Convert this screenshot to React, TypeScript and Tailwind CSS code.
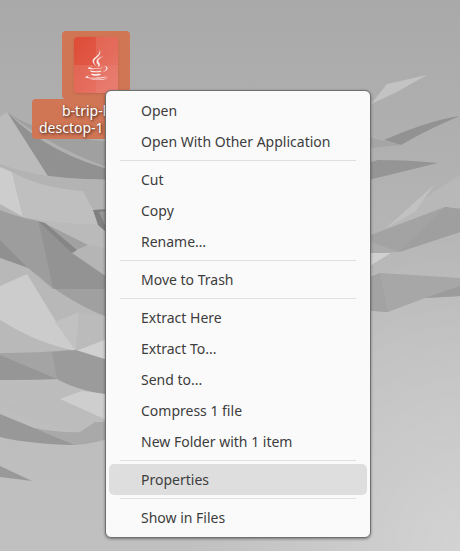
import { FaJava } from "react-icons/fa";

const groups: string[][] = [
  ["Open", "Open With Other Application"],
  ["Cut", "Copy", "Rename…"],
  ["Move to Trash"],
  ["Extract Here", "Extract To...", "Send to...", "Compress 1 file", "New Folder with 1 item"],
  ["Properties"],
  ["Show in Files"],
];

function Wallpaper() {
  return (
    <svg
      className="absolute inset-0 h-full w-full"
      viewBox="0 0 460 551"
      preserveAspectRatio="xMidYMid slice"
      aria-hidden="true"
    >
      <defs>
        <linearGradient id="sky" x1="0" y1="0" x2="0" y2="1">
          <stop offset="0" stopColor="#a9a9a9" />
          <stop offset="0.3" stopColor="#b1b1b1" />
          <stop offset="0.65" stopColor="#bcbcbc" />
          <stop offset="1" stopColor="#c0c0c0" />
        </linearGradient>
        <radialGradient id="glow" cx="1" cy="1" r="0.6">
          <stop offset="0" stopColor="#ffffff" stopOpacity="0.3" />
          <stop offset="1" stopColor="#ffffff" stopOpacity="0" />
        </radialGradient>
      </defs>
      <rect width="460" height="551" fill="url(#sky)" />
      <rect width="460" height="551" fill="url(#glow)" />

      {/* left wing, top to bottom */}
      <path fill="#a0a0a0" d="M7 112Q40 136 120 143V172Q50 148 7 112z" />
      <path fill="#919191" d="M7 112Q50 156 120 172V180L49 178z" />
      <path fill="#bbbbbb" d="M7 112L49 178Q20 173 0 164V117z" />
      <path fill="#b3b3b3" d="M0 164Q40 180 120 180V226Q40 226 0 204z" />
      <path fill="#cdcdcd" d="M0 167L12 172L23 217L0 204z" />
      <path fill="#bfbfbf" d="M12 172Q40 188 83 191L92 208L105 225Q60 225 23 217z" />
      <path fill="#bababa" d="M23 217Q60 226 120 224V252L88 245L38 221z" />
      <path fill="#808080" d="M93 210L120 208V240L105 231L98 225z" />
      <path fill="#989898" d="M99 212L120 210V228L105 225z" />
      <path fill="#9d9d9d" d="M0 210Q20 218 38 221L53 288L28 268L0 258z" />
      <path fill="#909090" d="M0 240L28 268L0 258z" />
      <path fill="#939393" d="M38 221L120 286V289H53z" />
      <path fill="#a1a1a1" d="M42 222L88 245L76 250z" />
      <path fill="#868686" d="M38 221L45 223L77 250L72 253z" />
      <path fill="#b5b5b5" d="M72 253L88 245L120 252V286z" />
      <path fill="#b8b8b8" d="M0 258L28 268Q60 304 120 322V345L76 351L0 320z" />
      <path fill="#a0a0a0" d="M28 268L53 289H120V322Q70 305 28 268z" />
      <path fill="#cccccc" d="M0 286L27 274L55 320L76 351Q38 344 0 320z" />
      <path fill="#c1c1c1" d="M55 322L79 312L76 351z" />
      <path fill="#bbbbbb" d="M79 312L120 318V338L76 351z" />
      <path fill="#d0d0d0" d="M76 351L120 334V363z" />
      <path fill="#b9b9b9" d="M0 320Q38 344 76 351Q40 353 0 352z" />
      <path fill="#a4a4a4" d="M0 353Q40 353 70 350L120 364V396Q80 392 57 379Q30 380 0 380z" />
      <path fill="#969696" d="M0 355L57 379Q30 380 0 380z" />
      <path fill="#9b9b9b" d="M52 352L76 350L120 364V396Q80 392 57 379z" />
      <path fill="#bcbcbc" d="M0 404L60 399L120 424L80 432Q30 422 0 404z" />
      <path fill="#cecece" d="M60 399L82 391L120 396V426z" />
      <path fill="#a9a9a9" d="M34 428Q60 433 80 432L95 422H120V435Q95 444 75 445z" />
      <path fill="#989898" d="M0 414L34 428L75 445Q30 444 0 437z" />
      <path fill="#999999" d="M0 466L32 481L0 477z" />

      {/* right wing, top to bottom */}
      <path fill="#c3c3c3" d="M371 104L387 84L427 75L395 93z" />
      <path fill="#a5a5a5" d="M360 135L401 145L360 149z" />
      <path fill="#929292" d="M384 140Q430 120 460 116Q430 128 401 145z" />
      <path fill="#959595" d="M360 165L378 160Q410 160 438 163L360 182z" />
      <path fill="#b8b8b8" d="M386 228L434 192L460 175V208L400 226z" />
      <path fill="#c1c1c1" d="M386 228L434 185L415 212z" />
      <path fill="#a3a3a3" d="M360 239L445 207L460 209V232L399 252L360 253z" />
      <path fill="#ababab" d="M360 238L399 252L360 253z" />
      <path fill="#9f9f9f" d="M445 207L460 209V232L399 252z" />
      <path fill="#d0d0d0" d="M360 253H391L360 272z" />
      <path fill="#a7a7a7" d="M360 281L380 273L460 278V296L425 298L388 312L360 310z" />
      <path fill="#a3a3a3" d="M360 281L380 273L388 312L360 310z" />
      <path fill="#9c9c9c" d="M460 286V296L425 298z" />
    </svg>
  );
}

function DesktopFile() {
  return (
    <button type="button" className="absolute top-[31px] left-8 flex w-32 flex-col items-center text-left">
      <span className="flex h-[68px] w-[68px] justify-center rounded bg-[#d17655] pt-1.5">
        <span className="relative flex h-14 w-11 items-center justify-center overflow-hidden rounded bg-linear-to-br from-[#de4b35] to-[#e4685a] shadow">
          <span className="absolute top-0 right-0 h-7 w-[22px] bg-white/10" />
          <span className="absolute bottom-0 left-0 h-7 w-[22px] bg-white/10" />
          <span className="absolute right-0 bottom-0 h-7 w-[22px] bg-white/15" />
          <FaJava className="relative h-[30px] w-[23px] text-white/90" />
        </span>
      </span>
      <span className="flex h-10 w-full flex-col rounded bg-[#d17655] py-[3px] text-sm leading-[17px] whitespace-nowrap text-white [text-shadow:1px_1px_3px_#000c]">
        <span className="pl-[30px]">b-trip-l</span>
        <span className="pl-[7px]">desctop-1</span>
      </span>
    </button>
  );
}

function ContextMenu() {
  return (
    <div
      role="menu"
      className="absolute top-[90px] left-[105px] w-[266px] rounded-md border border-[#6f6f6f] bg-[#fafafa] px-[3px] py-1 shadow-[0_1px_3px_#0006]"
    >
      {groups.map((items, i) => (
        <div key={items[0]} role="group">
          {i > 0 && <hr className="mx-[11px] my-[3px] border-[#dfdfdf]" />}
          {items.map((label) => (
            <button
              key={label}
              type="button"
              role="menuitem"
              className={`block h-[31px] w-full rounded-[5px] pl-8 text-left text-sm text-[#3d3d3d] ${
                label === "Properties" ? "bg-[#dedede]" : ""
              }`}
            >
              {label}
            </button>
          ))}
        </div>
      ))}
    </div>
  );
}

export default function App() {
  return (
    <main className="relative min-h-screen overflow-hidden bg-[#b5b5b5] font-['Noto_Sans','Open_Sans',sans-serif]">
      <Wallpaper />
      <DesktopFile />
      <ContextMenu />
    </main>
  );
}
